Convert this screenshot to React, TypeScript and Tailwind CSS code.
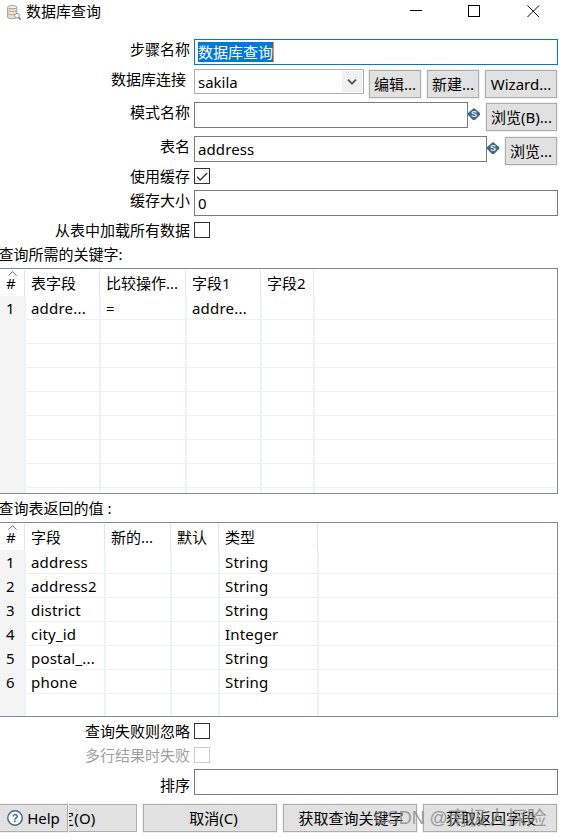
import * as React from "react";
import { clsx } from "clsx";

interface RowProps {
  label: string;
  className: string;
  labelClassName?: string;
  children: React.ReactNode;
}

const Row = ({ label, className, labelClassName = "leading-5", children }: RowProps) => (
  <div className={clsx("flex items-start", className)}>
    <div className={clsx("mr-1 w-[190px] shrink-0 text-right", labelClassName)}>
      {label}
    </div>
    {children}
  </div>
);

const TextBox = ({ value, className }: { value?: string; className: string }) => (
  <div
    className={clsx(
      "h-[26px] shrink-0 border border-[#7a7a7a] bg-white pl-[3px] leading-[25px] tracking-[0.1px]",
      className
    )}
  >
    {value}
  </div>
);

const Button = ({ children, className }: { children: React.ReactNode; className: string }) => (
  <button
    className={clsx(
      "flex h-7 shrink-0 items-center justify-center whitespace-nowrap border border-[#adadad] bg-[#e1e1e1] outline outline-[#f0f0f0]",
      className
    )}
  >
    {children}
  </button>
);

const CheckBox = ({ checked, disabled }: { checked?: boolean; disabled?: boolean }) => (
  <div
    className={clsx(
      "h-4 w-4 shrink-0 border bg-white",
      disabled ? "border-[#cccccc]" : "border-[#333333]"
    )}
  >
    {checked && (
      <svg viewBox="0 0 14 14" className="h-3.5 w-3.5" fill="none" stroke="#333" strokeWidth="1.3">
        <path d="M2 7.8 5.2 11 12.2 4" />
      </svg>
    )}
  </div>
);

const VariableIcon = () => (
  <svg viewBox="0 0 12 12" className="mt-1.5 h-3 w-3 shrink-0">
    <path d="M6 0 12 5V7L7 12H5L0 7V5Z" fill="#3f6684" />
    <text
      x="6"
      y="9.2"
      textAnchor="middle"
      fill="#e4edf3"
      fontSize="9"
      fontWeight="bold"
      fontFamily="Liberation Sans, sans-serif"
    >
      S
    </text>
  </svg>
);

interface GridProps {
  columns: { title: string; width: string }[];
  rows: string[][];
  className: string;
}

const Grid = ({ columns, rows, className }: GridProps) => (
  <div
    className={clsx(
      "flex w-[558px] flex-col overflow-hidden border-y border-r border-[#828790] pr-px pb-px",
      className
    )}
  >
    <div className="flex h-[27px] shrink-0 pt-px">
      {columns.map((column, i) => (
        <div key={column.title} className={clsx("shrink-0 pr-px", column.width)}>
          <div
            className={clsx(
              "relative h-[26px] whitespace-nowrap border-r border-[#e5e5e5] leading-[26px]",
              i === 0 ? "pl-1.5" : "pl-[5px]"
            )}
          >
            {i === 0 && (
              <svg
                viewBox="0 0 9 5"
                className="absolute top-px left-2 h-[5px] w-[9px]"
                fill="none"
                stroke="#666"
              >
                <path d="M.5 4.5 4.5.7 8.5 4.5" />
              </svg>
            )}
            {column.title}
          </div>
        </div>
      ))}
    </div>
    {rows.map((row, r) => (
      <div key={r} className="flex h-6 shrink-0">
        {columns.map((column, i) => (
          <div
            key={column.title}
            className={clsx(
              "shrink-0 whitespace-nowrap border-r-2 border-b border-r-[#ecf1fa] leading-[25px] tracking-[0.2px]",
              i === 0 ? "border-b-[#f5f5f5] bg-[#f5f5f5] pl-1.5" : "border-b-[#f0f0f0] pl-[5px]",
              column.width
            )}
          >
            {row[i]}
          </div>
        ))}
        <div className="grow border-b border-[#f0f0f0]" />
      </div>
    ))}
  </div>
);

const keyColumns = [
  { title: "#", width: "w-[26px]" },
  { title: "表字段", width: "w-[75px]" },
  { title: "比较操作...", width: "w-[86px]" },
  { title: "字段1", width: "w-[75px]" },
  { title: "字段2", width: "w-[53px]" },
];

const keyRows = [["1", "addre...", "=", "addre..."], [], [], [], [], [], [], [], []];

const valueColumns = [
  { title: "#", width: "w-[26px]" },
  { title: "字段", width: "w-[80px]" },
  { title: "新的...", width: "w-[66px]" },
  { title: "默认", width: "w-[48px]" },
  { title: "类型", width: "w-[99px]" },
];

const valueRows = [
  ["1", "address", "", "", "String"],
  ["2", "address2", "", "", "String"],
  ["3", "district", "", "", "String"],
  ["4", "city_id", "", "", "Integer"],
  ["5", "postal_...", "", "", "String"],
  ["6", "phone", "", "", "String"],
  [],
];

const TitleBar = () => (
  <div className="flex h-[39px] items-start">
    <svg viewBox="0 0 14 16" className="mt-[5px] ml-[7px] h-4 w-3.5" fill="none">
      <path d="M.6 2.2V12c0 1.1 2 1.7 4.6 1.7s4.6-.6 4.6-1.7V2.2" fill="#f6dfbd" stroke="#8fa3b0" />
      <ellipse cx="5.2" cy="2.2" rx="4.6" ry="1.6" fill="#fbf1df" stroke="#8fa3b0" />
      <path d="M.6 5.5c1 1.3 8.2 1.3 9.2 0M.6 8.800c1 1.300 8.200 1.300 9.200 0" stroke="#a9a9a0" />
      <circle cx="10" cy="10.8" r="2.3" fill="#fff" stroke="#7b98ab" />
      <path d="m11.7 12.5 2 2.2" stroke="#5d8097" strokeWidth="1.3" />
    </svg>
    <span className="ml-[5px] leading-[23px]">数据库查询</span>
    <svg
      viewBox="0 0 130 13"
      className="mt-[5px] ml-auto mr-[23px] h-[13px] w-[130px]"
      fill="none"
      stroke="#000"
    >
      <path d="M0 5.5H12" />
      <rect x="58.5" y=".5" width="11" height="11" />
      <path d="M117.500.5 129 12M129 .5 117.500 12" />
    </svg>
  </div>
);

export default function App() {
  return (
    <div className="relative h-[838px] w-[563px] overflow-hidden bg-white font-['Noto_Sans','Noto_Sans_CJK_SC',sans-serif] text-[15px] text-black">
      <TitleBar />
      <Row label="步骤名称" className="h-[30px]">
        <div className="flex h-[26px] w-[364px] items-start border border-[#0078d7] pt-0.5 pl-[3px]">
          <span className="h-5 border-r border-[#ff8728] bg-[#0078d7] leading-[21px] text-white">
            数据库查询
          </span>
        </div>
      </Row>
      <Row label="数据库连接" className="h-[33px]" labelClassName="pr-1 leading-5">
        <div className="flex h-[25px] w-[170px] shrink-0 justify-between border border-[#adadad] p-px pl-[3px]">
          <span className="leading-[22px]">sakila</span>
          <span className="flex w-5 items-center justify-center bg-[#f0f0f0]">
            <svg viewBox="0 0 10 6" className="h-1.5 w-2.5" fill="none" stroke="#555" strokeWidth="1.8">
              <path d="m1 .7 4 4 4-4" />
            </svg>
          </span>
        </div>
        <Button className="mt-px ml-[5px] w-[52px]">编辑...</Button>
        <Button className="mt-px ml-1.5 w-[52px]">新建...</Button>
        <Button className="mt-px ml-1.5 w-[72px]">Wizard...</Button>
      </Row>
      <Row label="模式名称" className="h-[34px]">
        <TextBox className="w-[274px]" />
        <VariableIcon />
        <Button className="mt-px ml-1.5 w-[71px]">浏览(B)...</Button>
      </Row>
      <Row label="表名" className="h-8">
        <TextBox className="w-[293px]" value="address" />
        <VariableIcon />
        <Button className="mt-px ml-1.5 w-[52px]">浏览...</Button>
      </Row>
      <Row label="使用缓存" className="h-[22px]" labelClassName="leading-[17px]">
        <CheckBox checked />
      </Row>
      <Row label="缓存大小" className="h-8">
        <TextBox className="w-[364px]" value="0" />
      </Row>
      <Row label="从表中加载所有数据" className="h-6" labelClassName="leading-4">
        <CheckBox />
      </Row>
      <div className="-ml-[1.5px] h-[22px] leading-[17px]">查询所需的关键字:</div>
      <Grid columns={keyColumns} rows={keyRows} className="h-[226px]" />
      <div className="-ml-[1.5px] h-7 leading-[29px]">查询表返回的值 :</div>
      <Grid columns={valueColumns} rows={valueRows} className="mb-1.5 h-[195px]" />
      <Row label="查询失败则忽略" className="h-6" labelClassName="leading-4">
        <CheckBox />
      </Row>
      <Row label="多行结果时失败" className="h-[22px]" labelClassName="leading-4 text-[#a0a0a0]">
        <CheckBox disabled />
      </Row>
      <Row label="排序" className="h-[35px]" labelClassName="leading-8">
        <TextBox className="w-[364px]" />
      </Row>
      <div className="flex">
        <Button className="-ml-px w-[69px] gap-1">
          <svg viewBox="0 0 16 16" className="h-4 w-4" fill="none">
            <circle cx="8" cy="8" r="7.2" fill="#fff" stroke="#3f6684" strokeWidth="1.4" />
            <text
              x="8"
              y="12"
              textAnchor="middle"
              fill="#3f6684"
              fontSize="11"
              fontWeight="bold"
              fontFamily="Liberation Sans, sans-serif"
            >
              ?
            </text>
          </svg>
          Help
        </Button>
        {/* the OK button runs on under Help, only its right part shows */}
        <div className="ml-px flex h-7 w-[68px] items-center overflow-hidden border-y border-r border-[#adadad] bg-[#e1e1e1]">
          <span className="-ml-2.5 whitespace-nowrap tracking-[0.2px]">定(O)</span>
        </div>
        <Button className="ml-1.5 w-[134px] pl-[7px]">取消(C)</Button>
        <Button className="ml-1.5 w-[134px] pl-0.5">获取查询关键字</Button>
        <Button className="ml-1.5 w-[134px] pl-0.5">获取返回字段</Button>
      </div>
      <div className="pointer-events-none absolute top-[804px] left-[374px] flex whitespace-nowrap leading-[28px] text-[#808080]/75">
        <span className="font-['Liberation_Sans',sans-serif] text-[18px] tracking-[-0.1px]">
          CSDN @
        </span>
        <span className="text-[19.8px]">南极人探险</span>
      </div>
    </div>
  );
}
